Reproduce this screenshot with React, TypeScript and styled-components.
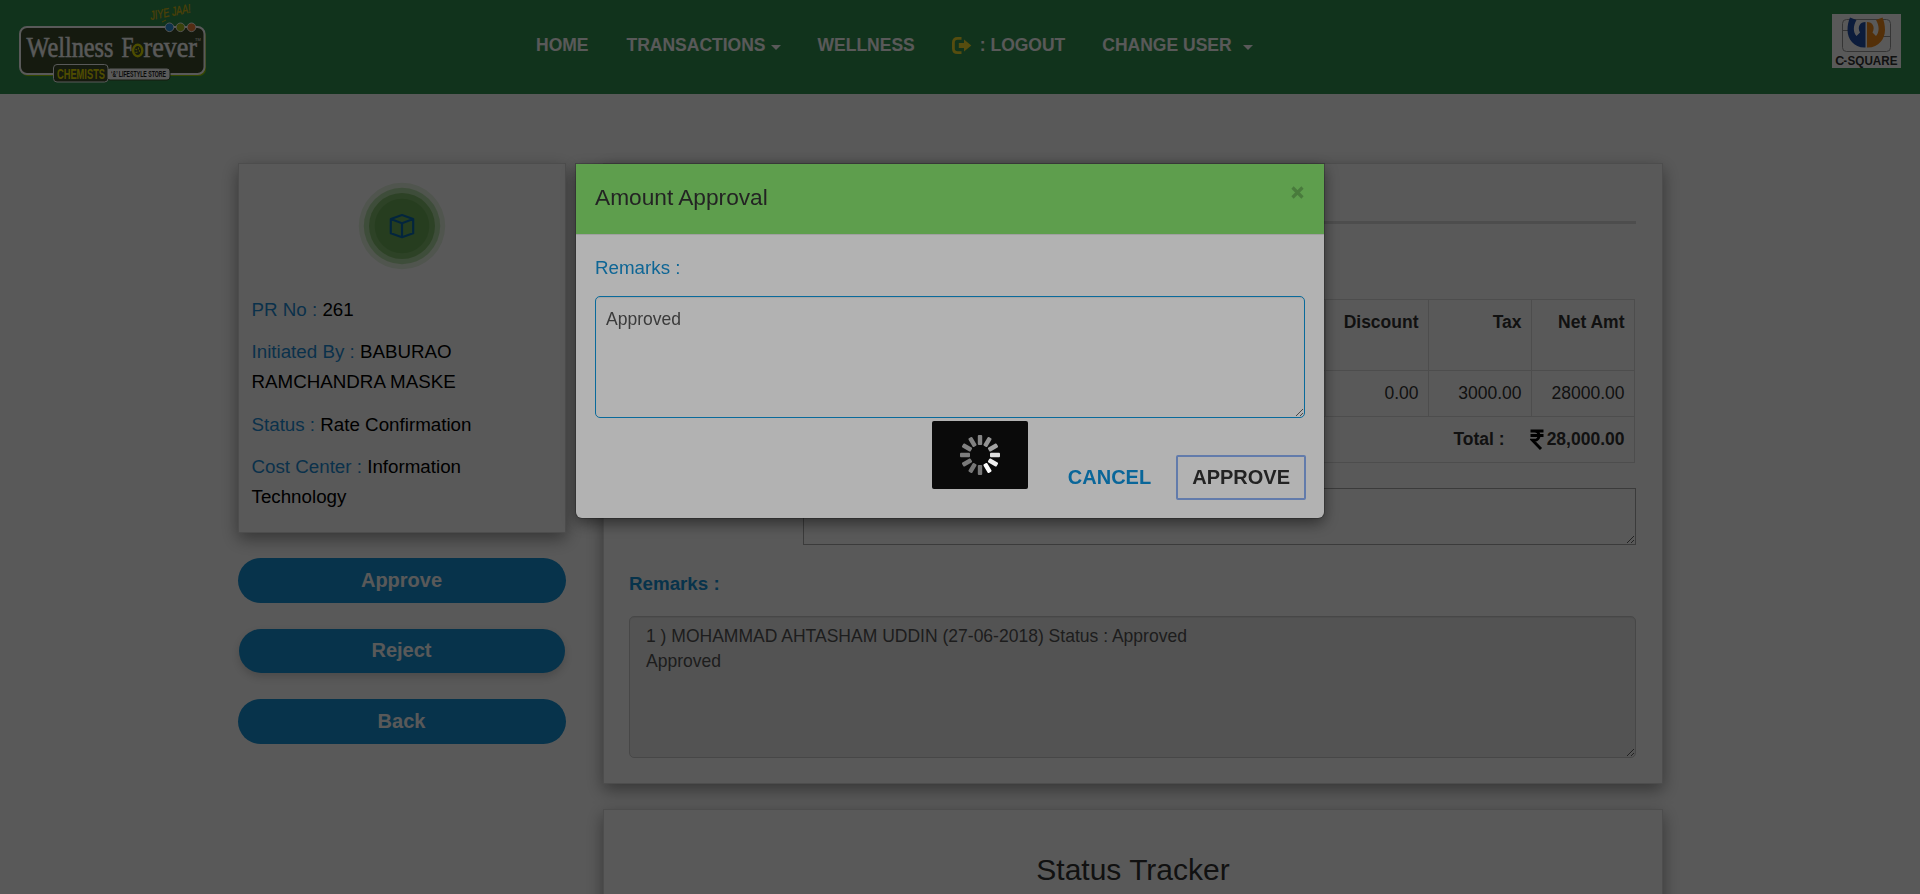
import React from 'react';
import styled, { createGlobalStyle, css } from 'styled-components';

const Global = createGlobalStyle`
  * { box-sizing: border-box; }
  html, body { margin: 0; padding: 0; }
  body {
    height: 894px;
    overflow: hidden;
    background: #fff;
    color: #333;
    font-family: "Liberation Sans", Arial, sans-serif;
    font-size: 17.5px;
    line-height: 1.43;
  }
`;

const Page = styled.div`
  height: 894px;
  overflow: hidden;
`;

const Navbar = styled.header`
  height: 94px;
  background: #339250;
  display: grid;
  grid-template-columns: 536px 1fr 88px;
`;

const Brand = styled.div`
  padding: 0 0 0 15px;
`;

const Nav = styled.nav`
  display: flex;
  padding-top: 33px;
`;

const NavItem = styled.a<{ $gap: number }>`
  display: flex;
  align-items: center;
  height: 25px;
  margin-right: ${(p) => p.$gap}px;
  color: #fff;
  font-size: 17.5px;
  font-weight: 700;
  white-space: pre;
`;

const NavLabel = styled.span`
  margin-left: 8px;
`;

const Caret = styled.i<{ $space: number }>`
  margin: 3px 0 0 ${(p) => p.$space}px;
  border: 5px solid transparent;
  border-top-color: #fff;
  border-bottom: 0;
`;

const Partner = styled.div`
  padding-top: 14px;
`;

const Columns = styled.main`
  display: grid;
  grid-template-columns: 328px 1060px;
  column-gap: 37px;
  padding: 69px 0 0 238px;
  align-items: start;
`;

const Stack = styled.div`
  display: flex;
  flex-direction: column;
  gap: 25px;
`;

const Card = styled.section`
  background: #fff;
  border: 1px solid #ddd;
  box-shadow: 0 6px 16px rgba(0, 0, 0, 0.4);
`;

const Summary = styled(Card)`
  height: 370px;
  padding: 18px 13.5px 0 12.5px;
`;

const Badge = styled.div`
  width: 88px;
  height: 88px;
  margin: 0 auto 24.5px;
`;

const Fact = styled.p`
  margin: 0 0 12.6px;
  color: #000;
  font-size: 18.75px;
  line-height: 30px;
`;

const FactLabel = styled.span`
  color: #1f8dd6;
`;

const Pills = styled.div`
  display: flex;
  flex-direction: column;
  gap: 25.5px;
`;

const Pill = styled.button<{ $raised?: boolean }>`
  height: 45px;
  padding: 0 7px 0 6px;
  border: 0;
  border-radius: 23px;
  background: #1592d6;
  color: #fff;
  font: 700 20px "Liberation Sans", Arial, sans-serif;
  ${(p) =>
    p.$raised &&
    css`
      height: 44px;
      margin: 0 1px 0.5px;
      box-shadow: 0 4px 10px rgba(0, 0, 0, 0.18);
    `}
`;

const Detail = styled(Card)`
  height: 621px;
  padding: 57px 26px 0 25px;
`;

const Rule = styled.hr`
  height: 3px;
  margin: 0 0 75px;
  border: 0;
  background: #ddd;
`;

const Table = styled.table`
  width: 1006px;
  border-collapse: collapse;
  border: 1px solid #ddd;
`;

const Cell = styled.td<{ $h: number; $bold?: boolean }>`
  height: ${(p) => p.$h}px;
  padding: 10px 9.5px 10px 10px;
  border: 1px solid #ddd;
  vertical-align: top;
  text-align: right;
  font-size: 17.5px;
  font-weight: ${(p) => (p.$bold ? 700 : 400)};
  white-space: nowrap;
`;

const TotalRow = styled.div`
  display: flex;
  justify-content: flex-end;
  align-items: center;
`;

const TotalLabel = styled.span`
  margin-right: 25px;
`;

const NoteArea = styled.textarea`
  display: block;
  width: 833px;
  height: 57px;
  margin: 25px 0 0 auto;
  border: 1px solid #a9a9a9;
  background: #fff;
`;

const SectionLabel = styled.h3`
  margin: 24.5px 0 19px;
  color: #1592d6;
  font-size: 18.75px;
  line-height: 27px;
`;

const Field = styled.textarea<{ $h: number; $active?: boolean }>`
  display: block;
  width: 100%;
  height: ${(p) => p.$h}px;
  padding: ${(p) => (p.$active ? '10px' : '7px 16px')};
  border: 1px solid ${(p) => (p.$active ? '#0e99de' : '#ccc')};
  border-radius: 5px;
  outline: none;
  background: ${(p) => (p.$active ? '#fff' : '#eee')};
  box-shadow: inset 0 1px 1px rgba(0, 0, 0, 0.075);
  color: #555;
  font: 17.52px/25px "Liberation Sans", Arial, sans-serif;
`;

const Tracker = styled(Card)`
  height: 200px;
  padding-top: 42px;
  text-align: center;
`;

const TrackerTitle = styled.h2`
  margin: 0;
  color: #333;
  font-size: 30px;
  font-weight: 400;
  line-height: 36px;
`;

const Shade = styled.div<{ $alpha: number }>`
  position: fixed;
  inset: 0;
  background: rgba(0, 0, 0, ${(p) => p.$alpha});
`;

const Modal = styled.div`
  position: fixed;
  left: 576px;
  top: 164px;
  width: 748px;
  height: 354px;
  border-radius: 0 0 6px 6px;
  background: #fff;
  box-shadow: 0 5px 15px rgba(0, 0, 0, 0.5), 0 0 0 1px rgba(0, 0, 0, 0.2);
`;

const ModalHeader = styled.div`
  display: flex;
  justify-content: space-between;
  height: 71px;
  padding: 17px 19px 0;
  border-bottom: 1px solid #e5e5e5;
  background: #87e26f;
`;

const ModalTitle = styled.h4`
  margin: 0;
  color: #333;
  font-size: 22.7px;
  font-weight: 400;
  line-height: 32px;
`;

const CloseMark = styled.svg`
  margin: 5px 1px 0 0;
`;

const ModalBody = styled.div`
  padding: 19px 19px 0;
`;

const ModalLabel = styled.div`
  margin-bottom: 15px;
  color: #1592d6;
  font-size: 18.75px;
  line-height: 27px;
`;

const ModalActions = styled.div`
  display: flex;
  justify-content: flex-end;
  align-items: center;
  padding: 37px 18px 0;
`;

const Action = styled.button<{ $focused?: boolean }>`
  height: 45px;
  padding: ${(p) => (p.$focused ? '0 14px 1px' : '0 25px 1px')};
  border: ${(p) => (p.$focused ? '2px solid #8db0f5' : '0')};
  border-radius: 2px;
  background: none;
  color: ${(p) => (p.$focused ? '#333' : '#0e92dc')};
  font: 700 20px "Liberation Sans", Arial, sans-serif;
`;

const Loader = styled.div`
  position: fixed;
  left: 932px;
  top: 421px;
  display: grid;
  place-items: center;
  width: 96px;
  height: 68px;
  border-radius: 2px;
  background: #0a0a0a;
`;

const serif = '"Liberation Serif", serif';
const sans = '"Liberation Sans", sans-serif';

function WellnessLogo() {
  return (
    <svg width="200" height="88" viewBox="15 0 200 88">
      <rect x="21" y="29" width="185" height="47" rx="7" fill="#9c0" />
      <rect x="20" y="27" width="184.500" height="47" rx="7" fill="#3c4c2c" stroke="#fff" strokeWidth="2" />
      <g fill="#fff" stroke="#fff" strokeWidth="0.500" fontFamily={serif} fontSize="29">
        <text x="26.500" y="57.300" textLength="87" lengthAdjust="spacingAndGlyphs">Wellness</text>
        <text x="121.500" y="57.300" textLength="12" lengthAdjust="spacingAndGlyphs">F</text>
        <text x="143.500" y="57.300" textLength="53.500" lengthAdjust="spacingAndGlyphs">rever</text>
      </g>
      <text x="195" y="41" fill="#fff" fontFamily={sans} fontSize="4">TM</text>
      <ellipse cx="137.700" cy="50.500" rx="4.600" ry="5.800" fill="#3c4c2c" stroke="#dcdc00" strokeWidth="2.400" />
      <path d="M135.500 49l1.500 1m1.500-2.500v2m-3 3l2-.500m1.500-1.500l1 1" stroke="#dcdc00" strokeWidth="1.200" />
      <circle cx="169.500" cy="27.300" r="4.300" fill="#2b8fd6" stroke="#fff" strokeWidth="0.900" />
      <circle cx="180.500" cy="27.300" r="4.300" fill="#a5bd20" stroke="#fff" strokeWidth="0.900" />
      <circle cx="191.500" cy="27.300" r="4.300" fill="#f0803a" stroke="#fff" strokeWidth="0.900" />
      <text x="151" y="20" transform="rotate(-10.500 151 20)" fill="#d8b814" stroke="#d8b814" strokeWidth="0.300" fontFamily={sans} fontStyle="italic" fontSize="12.500" textLength="41" lengthAdjust="spacingAndGlyphs">JIYE JAA!</text>
      <path d="M162 22l4-2" stroke="#d8b814" />
      <rect x="107" y="68" width="63" height="12" rx="3" fill="#fff" stroke="#3c4c2c" />
      <rect x="53.500" y="64.500" width="54.500" height="17.500" rx="3.500" fill="#3c4c2c" stroke="#fff" />
      <text x="57" y="79" fill="#e6dc00" fontFamily={sans} fontSize="15.500" fontWeight="700" textLength="48" lengthAdjust="spacingAndGlyphs">CHEMISTS</text>
      <text x="111" y="77" fill="#222" fontFamily={sans} fontSize="8.500" fontWeight="700" textLength="55" lengthAdjust="spacingAndGlyphs">‘&amp;’ LIFESTYLE STORE</text>
    </svg>
  );
}

function CSquareLogo() {
  return (
    <svg width="69" height="54" viewBox="0 0 69 54" overflow="visible">
      <rect width="69" height="54" fill="#fff" />
      <rect x="10.500" y="5.500" width="48" height="32" rx="4" fill="none" stroke="#999" />
      <path d="M10 16.500h12M47 22.500h12" stroke="#999" />
      <path d="M18 3.500l6.500 2.500C21 12 21 18 24.500 22l3.500-3.500C25 13 28 8 33.500 8v25.500C22 34 15.500 25 15.500 16c0-5 1-9 2.500-12.500z" fill="#2450a8" />
      <path d="M50.500 3.500L44 6c3.500 6 3.500 12 0 16l-3.500-3.500C43.500 13 40.500 8 35 8v25.500C46.500 34 53 25 53 16c0-5-1-9-2.500-12.500z" fill="#f08a1c" />
      <text y="50.800" fill="#333" fontFamily={sans} fontSize="13.500" fontWeight="700">
        <tspan x="3.300" textLength="9" lengthAdjust="spacingAndGlyphs">C</tspan>
        <tspan x="11.500" textLength="3.500" lengthAdjust="spacingAndGlyphs">-</tspan>
        <tspan x="15.500" textLength="50" lengthAdjust="spacingAndGlyphs">SQUARE</tspan>
      </text>
    </svg>
  );
}

function LogoutIcon() {
  return (
    <svg width="20" height="18" viewBox="0 0 20 18">
      <path d="M9.500 1.400H5.500Q1.400 1.400 1.400 5.500v6q0 4.100 4.100 4.100h4" fill="none" stroke="#f5dc2b" strokeWidth="2.800" />
      <path d="M6.800 6h5.200V2.500l7.300 6-7.300 6V11H6.800z" fill="#f5dc2b" />
    </svg>
  );
}

function BoxBadge() {
  return (
    <svg width="88" height="88" viewBox="0 0 88 88">
      <circle cx="44" cy="44" r="43.200" fill="#78c060" opacity="0.200" />
      <circle cx="44" cy="44" r="38.200" fill="#78c060" opacity="0.450" />
      <circle cx="44" cy="44" r="33" fill="#6cae55" opacity="0.700" />
      <circle cx="44" cy="44" r="27.300" fill="#6eae5a" />
      <path d="M32.800 37L44 33l11.200 4v14.200L44 55.200l-11.200-4zM32.800 37L44 41.200 55.200 37M44 41.200v14" fill="none" stroke="#0a6cb0" strokeWidth="2.200" strokeLinejoin="round" />
    </svg>
  );
}

const RupeeMark = styled.svg`
  margin-right: 3px;
`;

function Rupee() {
  return (
    <RupeeMark width="14" height="21" viewBox="0 0 14 21">
      <path d="M.500 2h13M.500 6.500h13M1 2h3.500c6 0 6 9.300 0 9.300H2.500l8.500 8.700" fill="none" stroke="#000" strokeWidth="2.900" />
    </RupeeMark>
  );
}

const spokeShades = ['#858585', '#939393', '#a3a3a3', '#e0e0e0', '#f0f0f0', '#fff', '#777', '#777', '#7a7a7a', '#7e7e7e', '#808080', '#828282'];

function Spinner() {
  return (
    <svg width="40" height="40" viewBox="-20 -20 40 40">
      {spokeShades.map((shade, i) => (
        <rect key={i} x="-2.200" y="-20" width="4.400" height="10" rx="1" fill={shade} transform={`rotate(${i * 30})`} />
      ))}
    </svg>
  );
}

const facts = [
  ['PR No :', '261'],
  ['Initiated By :', 'BABURAO RAMCHANDRA MASKE'],
  ['Status :', 'Rate Confirmation'],
  ['Cost Center :', 'Information Technology'],
];

export default function App() {
  return (
    <Page>
      <Global />
      <Navbar>
        <Brand><WellnessLogo /></Brand>
        <Nav>
          <NavItem $gap={38}>HOME</NavItem>
          <NavItem $gap={37}>TRANSACTIONS<Caret $space={5} /></NavItem>
          <NavItem $gap={37}>WELLNESS</NavItem>
          <NavItem $gap={37}><LogoutIcon /><NavLabel>: LOGOUT</NavLabel></NavItem>
          <NavItem $gap={0}>CHANGE USER<Caret $space={11} /></NavItem>
        </Nav>
        <Partner><CSquareLogo /></Partner>
      </Navbar>
      <Columns>
        <Stack>
          <Summary>
            <Badge><BoxBadge /></Badge>
            {facts.map(([label, value]) => (
              <Fact key={label}><FactLabel>{label}</FactLabel> {value}</Fact>
            ))}
          </Summary>
          <Pills>
            <Pill>Approve</Pill>
            <Pill $raised>Reject</Pill>
            <Pill>Back</Pill>
          </Pills>
        </Stack>
        <Stack>
          <Detail>
            <Rule />
            <Table>
              <colgroup><col /><col width="103" /><col width="103" /><col width="103" /></colgroup>
              <tbody>
                <tr>
                  <Cell $h={71} /><Cell $h={71} $bold>Discount</Cell><Cell $h={71} $bold>Tax</Cell><Cell $h={71} $bold>Net Amt</Cell>
                </tr>
                <tr>
                  <Cell $h={46} /><Cell $h={46}>0.00</Cell><Cell $h={46}>3000.00</Cell><Cell $h={46}>28000.00</Cell>
                </tr>
                <tr>
                  <Cell $h={46} $bold colSpan={4}>
                    <TotalRow><TotalLabel>Total :</TotalLabel><Rupee />28,000.00</TotalRow>
                  </Cell>
                </tr>
              </tbody>
            </Table>
            <NoteArea />
            <SectionLabel>Remarks :</SectionLabel>
            <Field $h={142} readOnly value={'1 ) MOHAMMAD AHTASHAM UDDIN (27-06-2018) Status : Approved\nApproved'} />
          </Detail>
          <Tracker><TrackerTitle>Status Tracker</TrackerTitle></Tracker>
        </Stack>
      </Columns>
      <Shade $alpha={0.5} />
      <Modal>
        <ModalHeader>
          <ModalTitle>Amount Approval</ModalTitle>
          <CloseMark width="13" height="13" viewBox="0 0 13 13">
            <path d="M1.500 1.500l10 10m0-10l-10 10" stroke="#000" strokeOpacity="0.220" strokeWidth="3.200" />
          </CloseMark>
        </ModalHeader>
        <ModalBody>
          <ModalLabel>Remarks :</ModalLabel>
          <Field $h={122} $active readOnly value="Approved" />
        </ModalBody>
        <ModalActions>
          <Action>CANCEL</Action>
          <Action $focused>APPROVE</Action>
        </ModalActions>
      </Modal>
      <Shade $alpha={0.3} />
      <Loader><Spinner /></Loader>
    </Page>
  );
}
